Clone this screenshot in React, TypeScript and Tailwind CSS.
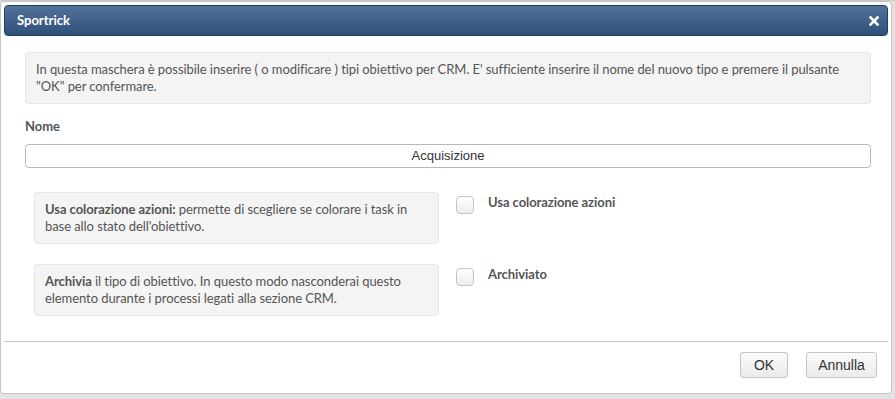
import React from "react";

const body = { fontFamily: "Lato, 'Noto Sans', sans-serif" };

function Checkbox() {
  return (
    <div className="w-[18px] h-[18px] shrink-0 rounded-[4px] border border-[#c4c4c4] bg-gradient-to-b from-[#ffffff] to-[#ececec]" />
  );
}

export default function App() {
  return (
    <div className="w-[895px] h-[399px] bg-[#e3e3e3] overflow-hidden relative" style={body}>
      <div className="h-[1px] bg-[#c9c9c9]" />
      <div className="w-[892px] h-[393px] bg-white border border-[#c5c5c5] rounded-[4px] p-[3px] flex flex-col">
        <div className="h-[31px] shrink-0 rounded-[4px] border border-[#203f66] bg-gradient-to-b from-[#53729a] to-[#2d5079] flex items-center justify-between pl-[12px] pr-[8px]">
          <span className="text-white font-bold text-[13px]">Sportrick</span>
          <svg width="10" height="10" viewBox="0 0 10 10">
            <path d="M1.5 1.5 L8.5 8.5 M8.5 1.5 L1.5 8.5" stroke="white" strokeWidth="2.6" strokeLinecap="square" />
          </svg>
        </div>
        <div className="ml-[21px] mr-[17px] mt-[16px] flex flex-col tracking-[-0.07px]">
          <div className="h-[52px] rounded-[3px] border border-[#e6e6e6] bg-[#f4f4f4] px-[10px] pt-[8px] text-[13px] leading-[17px] text-[#555]">
            In questa maschera è possibile inserire ( o modificare ) tipi obiettivo per CRM. E' sufficiente inserire il nome del nuovo tipo e premere il pulsante "OK" per confermare.
          </div>
          <div className="mt-[14px] text-[13px] font-bold text-[#555] leading-[17px]">Nome</div>
          <div className="mt-[9px] h-[24px] rounded-[4px] border border-[#b9b9b9] flex items-center justify-center text-[13px] text-[#333] tracking-normal" style={{ fontFamily: "'Liberation Sans', Arial, sans-serif" }}>
            Acquisizione
          </div>
          <div className="mt-[24px] ml-[9px] flex items-start">
            <div className="w-[405px] h-[52px] rounded-[3px] border border-[#e6e6e6] bg-[#f4f4f4] px-[10px] pt-[8px] text-[13px] leading-[17px] text-[#555]">
              <span className="font-bold">Usa colorazione azioni:</span> permette di scegliere se colorare i task in base allo stato dell'obiettivo.
            </div>
            <div className="ml-[17px] mt-[4px]"><Checkbox /></div>
            <div className="ml-[14px] mt-[2px] text-[13px] font-bold text-[#555] leading-[17px]">Usa colorazione azioni</div>
          </div>
          <div className="mt-[20px] ml-[9px] flex items-start">
            <div className="w-[405px] h-[52px] rounded-[3px] border border-[#e6e6e6] bg-[#f4f4f4] px-[10px] pt-[8px] text-[13px] leading-[17px] text-[#555]">
              <span className="font-bold">Archivia</span> il tipo di obiettivo. In questo modo nasconderai questo elemento durante i processi legati alla sezione CRM.
            </div>
            <div className="ml-[17px] mt-[4px]"><Checkbox /></div>
            <div className="ml-[14px] mt-[2px] text-[13px] font-bold text-[#555] leading-[17px]">Archiviato</div>
          </div>
        </div>
        <div className="mt-[25px] h-[1px] bg-[#c8c8c8]" />
        <div className="mt-[10px] flex justify-end gap-[18px] pr-[11px]" style={{ fontFamily: "'Liberation Sans', Arial, sans-serif" }}>
          <button className="w-[48px] h-[26px] rounded-[3px] border border-[#c5c5c5] bg-gradient-to-b from-[#fafafa] to-[#ebebeb] text-[14px] text-[#333]">OK</button>
          <button className="w-[71px] h-[26px] rounded-[3px] border border-[#c5c5c5] bg-gradient-to-b from-[#fafafa] to-[#ebebeb] text-[14px] text-[#333]">Annulla</button>
        </div>
      </div>
    </div>
  );
}
